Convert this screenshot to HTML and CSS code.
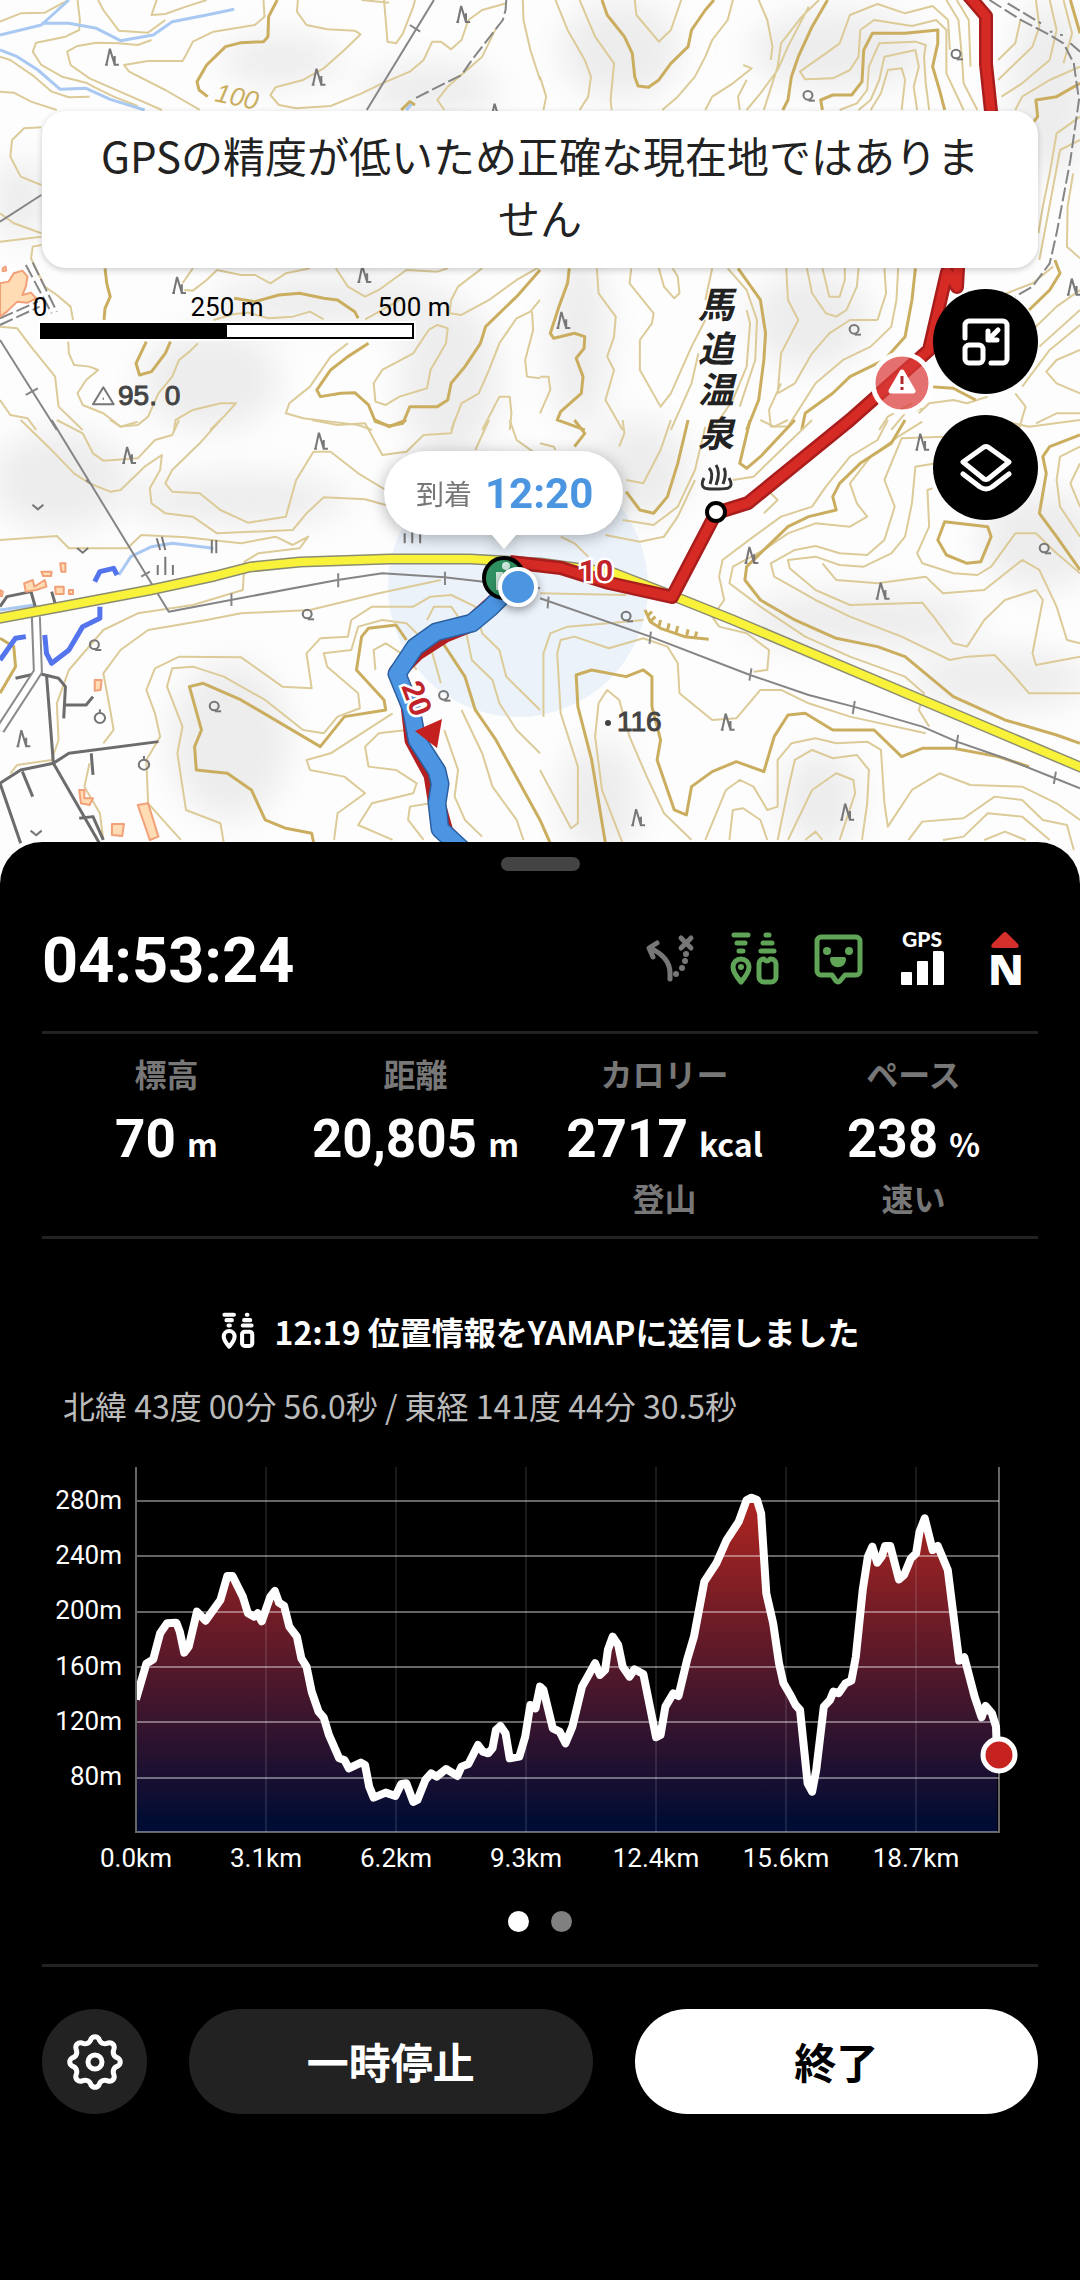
FILE: index.html
```html
<!DOCTYPE html>
<html lang="ja">
<head>
	<meta charset="utf-8">
	<meta name="viewport" content="width=device-width, initial-scale=1">
	<title>活動中</title>
	<link rel="stylesheet" href="styles.css">
</head>
<body>
	<main class="app">
		<section class="mapArea">
			<svg class="map" viewBox="0 0 1080 884" role="img" aria-label="地図">
				<defs>
					<filter id="soft" x="-50%" y="-50%" width="200%" height="200%">
						<feGaussianBlur stdDeviation="16"/>
					</filter>
					<symbol id="conifer" viewBox="-20 -30 40 60" overflow="visible">
						<path d="M-16 24L-6 -24L8 24M8 -2V24H20M-12 24H-20"/>
					</symbol>
					<symbol id="broad" viewBox="-20 -20 40 40" overflow="visible">
						<circle r="13"/>
						<path d="M2 16H20"/>
					</symbol>
					<symbol id="orchard" viewBox="-20 -20 40 40" overflow="visible">
						<circle r="15" cy="4"/>
						<path d="M0 -22V-8"/>
					</symbol>
					<symbol id="field" viewBox="-20 -20 40 40" overflow="visible">
						<path d="M-16 -6L0 8L16 -6"/>
					</symbol>
				</defs>
				<rect width="1080" height="884" fill="#fdfdfd"/>
				<!-- hill shading -->
				<g class="shade" filter="url(#soft)">
					<ellipse cx="280" cy="60" rx="60" ry="26"/>
					<ellipse cx="430" cy="90" rx="70" ry="28"/>
					<ellipse cx="620" cy="50" rx="60" ry="50"/>
					<ellipse cx="840" cy="50" rx="90" ry="40"/>
					<ellipse cx="1050" cy="90" rx="40" ry="90"/>
					<ellipse cx="20" cy="200" rx="30" ry="40"/>
					<ellipse cx="330" cy="300" rx="120" ry="26"/>
					<ellipse cx="210" cy="380" rx="70" ry="50"/>
					<ellipse cx="450" cy="380" rx="50" ry="80"/>
					<ellipse cx="580" cy="340" rx="30" ry="90"/>
					<ellipse cx="810" cy="320" rx="60" ry="50"/>
					<ellipse cx="60" cy="480" rx="70" ry="50"/>
					<ellipse cx="240" cy="500" rx="110" ry="26"/>
					<ellipse cx="640" cy="470" rx="50" ry="50"/>
					<ellipse cx="1040" cy="540" rx="60" ry="50"/>
					<ellipse cx="860" cy="620" rx="120" ry="30"/>
					<ellipse cx="1000" cy="680" rx="90" ry="30"/>
					<ellipse cx="230" cy="740" rx="60" ry="80"/>
					<ellipse cx="600" cy="800" rx="40" ry="60"/>
					<ellipse cx="820" cy="800" rx="40" ry="50"/>
				</g>
				<circle cx="518" cy="587" r="130" fill="#4c95e0" opacity=".1"/>

				<!-- contour lines, north west -->
				<g class="tile" transform="scale(.3444 .3333)">
					<path class="contour" d="M0 65L60 40L130 38L180 10L200 0M225 0L232 60L230 90L190 110L105 128L95 155L120 195L180 230L250 248L275 262L330 290L400 318M285 0L300 30L345 92L430 98L480 60M455 0L440 45L480 42L540 20L600 0M765 0L768 50L740 75L620 95L560 125L540 165L530 183L430 183L360 195L375 215L480 270L580 330M440 120L400 135L345 130L280 128L225 138L195 155L205 195L260 235L360 280L470 330M0 170L30 180L100 230L150 275L200 292L260 290M0 275L40 278L90 305L165 330"/>
					<path class="contour" d="M865 0L862 35L890 75L950 88L1030 92L1047 103L1000 150L940 205L880 240L800 262L785 285L810 315L860 325L960 318L1050 280L1110 250L1190 215L1230 180L1255 125L1280 125L1310 148L1340 120L1360 60L1400 30L1470 10M1115 0L1120 60L1125 125L1150 130L1170 100L1200 20L1205 0M1050 0L1130 8M1568 240L1540 150L1520 60L1518 0M1440 85L1400 170L1300 260L1270 300L1290 330M120 382L70 385L35 420L30 470L60 530L120 555M120 700L40 670L0 640M0 725L120 710M120 735L95 740L90 775L130 860L165 885L205 920L212 960"/>
					<path class="contour" d="M560 805L530 850M535 870L560 872L600 840L630 810L700 825L740 825L785 850L830 820L900 805M620 960L680 942L720 938L780 955L850 950L900 935L940 958M975 805L1010 860L1060 890L1100 870L1180 810L1270 815L1300 805M1060 958L1110 930L1160 900M1400 805L1330 860L1310 900L1305 940L1340 945L1420 900L1500 840L1568 800M1270 975L1300 985L1295 1030L1250 1110L1240 1165L1160 1190L1120 1215L1090 1205L1085 1150L1110 1110L1200 1060L1245 990ZM1010 1030L960 1070L900 1160L840 1210L830 1240L880 1255L960 1265L1040 1275L1080 1290"/>
					<path class="contour" d="M575 1030L550 1055L520 1080L500 1130L460 1180L430 1250L400 1275L350 1280L300 1240L240 1215L225 1180L250 1140L285 1110L260 1100L215 1095L200 1060L198 1025M0 980L50 985L90 1040L160 1130L170 1220L240 1290M0 1200L30 1245L80 1255L105 1290M610 1290L650 1250L685 1210L640 1210L560 1230L510 1260L505 1290M1568 900L1540 935L1500 955L1450 1030L1420 1110L1390 1180L1340 1210L1310 1290M1568 1135L1530 1130L1525 1080L1548 990L1545 935M1400 1290L1450 1190L1480 1190L1485 1240L1480 1290"/>
					<path class="contour main" d="M805 0L780 50L778 110L765 125L700 128L655 140L600 195L572 245L578 270L603 290M305 805L310 850L320 890L305 925L302 960M680 895L740 905L810 885L870 880L940 895L980 900L1030 935L1040 955M1568 810L1500 890L1410 980L1395 1030L1350 1100L1310 1150L1300 1200L1270 1220L1190 1220L1170 1270L1130 1278L1090 1265L1070 1215L1030 1178L990 1180L930 1190L920 1170L960 1110L1010 1070L1070 1030M425 1025L395 1090L405 1125L440 1115L480 1060L495 1025M1165 330L1190 305L1205 315"/>
					<path class="stream" d="M0 105L120 75L200 0M120 70L200 70L280 85L350 122L445 105L500 65L600 45L680 28M0 150L50 170L110 210L175 268L250 265L320 298L420 330M1180 330L1195 312"/>
					<path class="line" d="M1260 0L1065 330M1190 75L1220 95M0 665L120 585M0 1020L165 1290M75 1185L110 1165"/>
					<path class="line dash" d="M1470 0L1468 30L1460 60L1370 180L1340 225L1205 295M75 795L150 940M95 788L165 935M0 955L110 905M0 975L115 920"/>
					<path class="house" d="M0 850L25 845L40 820L65 812L80 830L75 860L65 885L90 878L105 895L80 908L50 905L20 935L0 950ZM8 805L16 800L18 812L8 814Z"/>
					<g class="sign">
						<use href="#conifer" x="305" y="140" width="40" height="60"/>
						<use href="#conifer" x="905" y="200" width="40" height="60"/>
						<use href="#conifer" x="1325" y="12" width="40" height="60"/>
						<use href="#conifer" x="1422" y="305" width="40" height="60"/>
						<use href="#conifer" x="500" y="825" width="40" height="60"/>
						<use href="#conifer" x="1038" y="792" width="40" height="60"/>
						<path d="M270 1213L300 1162L330 1213ZM298 1196H302"/>
					</g>
				</g>

				<!-- north east -->
				<g class="tile" transform="translate(540 0) scale(.3444 .3333)">
					<path class="contour" d="M0 230L18 290L10 330M45 0L80 90L130 180L148 230L140 290L115 330M115 0L160 110L215 190L205 300L208 330M275 0L280 45L345 125L380 90L400 30L410 0M560 0L545 60L500 120L480 170L450 230L400 290L355 330M635 0L660 60L675 140L670 180M590 195L615 205L560 250L500 290L480 330M600 240L575 290L580 330M780 20L720 140L690 210L640 280L600 330M810 0L760 50L700 130L690 200L650 330M1190 150L1185 60L1140 18L1060 40L980 12L900 45L870 130L830 160L775 200L755 215L770 238L850 235L900 210L925 170L930 90L970 60L1080 78L1150 60L1180 90L1180 220L1230 330"/>
					<path class="contour" d="M870 330L920 310L950 270L955 200L985 130L1090 125L1120 135L1115 170L1120 250L1130 330M925 330L960 300L985 240L1000 170L1090 150L1100 200L1085 260L1095 330M960 330L990 280L1010 210L1050 205L1060 240L1050 330M1180 0L1215 60L1225 170L1230 250L1270 330M1210 0L1245 60L1250 200M1395 60L1380 130L1330 180M1440 0L1450 80L1430 140L1330 240M1480 0L1500 90L1480 180L1400 250L1340 290M1568 200L1480 240L1400 290L1380 330M1520 0L1545 100L1520 190M1568 350L1500 400L1480 520L1460 620L1447 700M1568 420L1510 450L1490 560L1450 780M1548 520L1532 620L1530 740L1568 775"/>
					<path class="contour" d="M165 805L170 880L220 950L215 1010L195 1070L215 1110L190 1200L240 1290M265 805L260 850L330 940L325 970L290 1020L290 1110L350 1220L380 1180L440 1040L480 960M345 805L360 860L390 895L405 880L400 830L385 805M500 805L480 900M600 930L610 970L600 1100L560 1200L500 1290M545 805L600 870L630 960L625 1080L580 1220M460 1060L440 1150L380 1290M715 805L720 900L750 960L700 1060L690 1180L740 1150L790 1060L840 1000L900 960L980 960M775 805L790 880L830 940L860 950L890 930L920 860L925 805M820 805L840 890L870 890L885 840L885 805M1000 805L1005 880L980 960M1040 805L1035 900L1020 980L960 1040L880 1080L800 1150L720 1280L670 1280L665 1230L700 1150M0 1130L25 1130L30 1170L0 1240"/>
					<path class="contour" d="M1568 870L1500 920L1430 990M1568 930L1450 1040M1568 975L1480 1050L1400 1160M1568 1050L1500 1080L1470 1115L1500 1150L1568 1180M1100 1240L1130 1210L1200 1200L1240 1210L1300 1190M985 1290L1010 1250L1080 1210M1020 1290L1060 1240L1110 1225M1380 1180L1410 1220L1390 1290M1568 1240L1500 1240L1440 1270M1330 890L1430 850L1490 800"/>
					<path class="contour main" d="M180 0L195 45L245 110L268 160L275 230L285 258L315 262L345 240L380 190L430 140L440 90L480 30L505 0M835 0L790 80L750 170L730 230L720 300L705 330M820 330L815 300L850 285L905 285L935 245L940 150L965 100L1060 100L1155 90L1155 130L1140 200L1160 270L1175 330M1540 0L1568 100M1568 250L1500 290L1440 300L1445 350L1430 370M85 805L80 850L55 920L30 1000L40 1015L100 1000L130 1010L128 1045L105 1075L125 1130L120 1180L60 1235L50 1260L130 1290M575 805L640 900L655 1000L650 1080L635 1200L600 1290M1090 805L1080 900L1060 1010L1000 1080L900 1130L850 1180L770 1240L760 1290M1495 780L1510 820L1480 870L1420 930M1130 1160L1200 1165L1265 1200"/>
					<path class="line dash" d="M1305 0L1400 62L1480 105L1520 130L1550 190L1565 300L1540 480L1500 700L1480 790L1430 860L1380 890M1358 10L1455 70M1480 95H1488M1510 105H1518M1540 130L1568 155"/>
					<g class="sign">
						<use href="#broad" x="1188" y="142" width="40" height="40"/>
						<use href="#broad" x="758" y="266" width="40" height="40"/>
						<use href="#broad" x="892" y="968" width="40" height="40"/>
						<use href="#conifer" x="48" y="930" width="40" height="60"/>
						<use href="#conifer" x="1530" y="830" width="40" height="60"/>
					</g>
				</g>

				<!-- south west -->
				<g class="tile" transform="translate(0 420) scale(.3444 .3333)">
					<path class="contour" d="M60 0L140 80L215 160L260 190L320 215L350 210L420 140L470 105L465 150L435 205L440 250L480 280L560 290L630 340L850 330L890 280L940 232L1060 238L1120 255M165 0L240 40L270 100L300 122L400 115L450 60L500 45L520 0M320 0L350 20L400 5M640 0L580 70L500 150L480 190L500 215L580 220L640 270L720 308L830 290L860 180L910 95L960 95L1040 160L1120 210M905 0L980 15L1060 10L1110 105L1180 95L1230 45L1310 40L1320 0M1380 90L1420 0M1480 0L1500 60L1568 110"/>
					<path class="contour" d="M0 360L165 348L200 385L370 385L410 345L540 352L700 370L800 350L850 375L895 350L870 385L750 400L710 425L705 510L560 555L400 580L300 630L200 750L165 850L170 960L150 1020L50 1035L30 1060M1280 480L1100 520L900 570L700 580L600 600L430 630L350 690L300 760L320 870L330 930L300 970M1568 870L1470 770L1450 690L1400 640L1380 560L1310 525L1250 530L1200 560L1080 560L1020 600L1010 650L930 655L890 700L905 805L820 800L700 712L520 710L450 745L425 810L450 880L465 950L425 1020L430 1150L525 1260"/>
					<path class="contour" d="M650 1270L640 1210L540 1170L515 1000L530 920L485 800L500 745L560 740L650 770L770 840L880 930L940 940L980 890L1045 865L1040 820L950 740L940 700L1020 690L1040 620L1110 600L1180 610L1250 680L1280 790M1240 600L1260 560L1310 560L1350 620L1370 720L1430 780L1450 850L1500 930L1568 1000M1090 750L1085 690L1120 670L1180 710L1210 750M1140 880L1050 940L960 1000L890 1020L900 1050L1000 1070L1060 1120L980 1180L970 1260M1180 930L1100 940L1060 980L1070 1040L1150 1050L1210 1090L1200 1120L1080 1150L1040 1215L1140 1260M1250 1150L1190 1160L1185 1200L1230 1260M1290 930L1330 1050L1320 1130L1350 1200L1400 1250M1340 870L1400 1000L1430 1100L1500 1200L1520 1260M260 1030L245 1100L290 1180L300 1260"/>
					<path class="contour main" d="M1090 0L1130 20L1180 0M915 1290L905 1240L830 1225L770 1200L730 1110L660 1060L570 1050L565 980L585 930L550 800L590 790L700 840L930 980L1000 890L1120 870L1115 840L1035 750L1050 650L1070 625L1150 615L1180 660M1280 660L1350 770L1380 870L1440 960L1568 1200M0 655L40 680L45 740L0 820"/>
					<path class="stream" d="M345 465L380 410L440 380L500 370L620 385M0 570L100 555"/>
					<path class="river" d="M75 650L45 655L0 720M130 645L135 700L150 730L200 690L240 620L290 595L290 560M275 485L290 455L330 445L340 465"/>
					<path class="line" d="M150 0L490 575L670 540L980 480L1110 460L1290 472L1568 505M250 180L268 195M672 520V558M982 460V502M1292 455V495M410 470L435 455"/>
					<path class="road" d="M45 775L110 760L170 775L190 800L185 895M190 855L250 855L270 830M135 765L155 1030L300 1290M155 1030L60 1050L0 1090L60 1270M155 1030L200 1000L460 965M265 1000L270 1065M65 1055L95 1130M230 1195L270 1190L300 1260M0 560L20 530L90 515L105 570M150 515L160 550"/>
					<path class="laneEdge" d="M104 590L110 755L0 930"/>
					<path class="lane" d="M104 580L110 755L0 930"/>
					<path class="house" d="M400 1155L430 1150L460 1250L435 1260ZM325 1212L360 1212L355 1248L325 1245ZM275 780L295 780L292 810L275 812ZM230 1110L245 1110L245 1135L270 1135L260 1155L235 1150ZM70 490L95 480L100 500L130 480L135 500L105 510L75 515ZM120 455L150 455L148 468L125 468ZM175 430L190 430L190 455L178 455ZM160 500L185 500L185 522L162 522ZM200 510L212 510L212 522L200 522ZM0 510L8 515L6 528L0 528Z"/>
					<g class="sign">
						<use href="#conifer" x="355" y="75" width="40" height="60"/>
						<use href="#conifer" x="912" y="32" width="40" height="60"/>
						<use href="#conifer" x="48" y="925" width="40" height="60"/>
						<use href="#broad" x="872" y="562" width="40" height="40"/>
						<use href="#broad" x="254" y="654" width="40" height="40"/>
						<use href="#broad" x="602" y="838" width="40" height="40"/>
						<use href="#broad" x="1268" y="806" width="40" height="40"/>
						<use href="#orchard" x="270" y="870" width="40" height="40"/>
						<use href="#orchard" x="398" y="1010" width="40" height="40"/>
						<use href="#field" x="90" y="240" width="40" height="40"/>
						<use href="#field" x="220" y="370" width="40" height="40"/>
						<use href="#field" x="85" y="1218" width="40" height="40"/>
						<path d="M480 410V465M458 435V465M502 435V465M455 355L465 390M470 350L480 390M615 360V400M628 360V400M1175 340V370M1197 335V370M1220 340V370"/>
					</g>
				</g>

				<!-- south east -->
				<g class="tile" transform="translate(540 420) scale(.3444 .3333)">
					<path class="contour" d="M0 70L40 80L45 90M240 0L245 40L230 80M380 0L350 90L300 190L250 180M480 20L450 150L400 260L330 315L240 300M60 350L100 370L140 410M190 345L290 365L360 350L400 290L450 180M560 180L620 170L700 90L790 0M640 0L680 20L720 0M670 220L690 240L650 280M1010 0L980 60L900 110L830 200L790 260L700 290L620 350L530 420L520 470L535 540L500 590L520 620L600 640L665 690L660 750L620 755M1110 5L1040 50L960 110L900 190L920 250L950 290L900 320L800 310L720 340L650 390L560 440L550 490L640 560L770 650L900 710L1060 770L1115 820L1100 870L1130 920"/>
					<path class="contour" d="M1170 50L1050 55L1000 180L1030 260L1000 360L950 405L870 400L800 378L740 390L670 430L680 470L800 540L900 590L1050 650L1190 720L1240 710L1320 705L1370 760L1420 820L1568 820M1150 130L1090 140L1080 250L1060 350L1020 400L940 440L870 435L800 410L720 420L725 445L800 510L900 555L1110 548L1150 600L1200 670L1240 680L1290 600L1350 540L1440 510L1460 540L1430 700L1440 735L1568 710M1140 205L1125 210L1130 320L1095 400L1110 430L1200 460L1270 465L1310 440L1380 340L1440 340L1500 400L1568 460M820 430L860 480L980 490L1120 470L1170 520L1290 510L1400 420L1450 450L1500 560L1530 660L1568 670M1568 80L1510 110L1500 180L1510 260L1568 350M1568 130L1540 190L1568 260M1330 0L1420 20L1568 0"/>
					<path class="contour" d="M0 520L250 525M10 890L10 700L30 640L80 620L200 610L300 600M0 1050L90 1225L110 1210L110 1040L60 880L50 700L60 660L100 650L200 685L300 655L370 680L400 730L405 820L500 900L570 895L640 810L700 810L780 850L900 890L1120 940M240 1270L180 1110L160 950L170 850L195 810L230 840L260 950L310 1070L360 1180L440 1260M480 1260L540 1110L580 1080L620 1100L660 1170L690 1160L690 1020L730 970L800 955L860 970L950 965L990 990L1000 1150L1010 1220L1080 1110L1160 1060L1250 1095L1400 1100L1500 1150L1568 1200M690 1260L720 1110L740 1020L790 990L850 1015L920 1005L955 1050L950 1150L935 1260M550 1260L560 1170L590 1165L640 1200L660 1260M720 1260L790 1110L860 1060L910 1080L915 1120L870 1260M1070 1260L1110 1205L1230 1195L1320 1130L1400 1140L1460 1200L1530 1215L1550 1290M1170 1260L1230 1250L1300 1180L1400 1190L1480 1260M1290 1260L1350 1235L1410 1260M770 1260L800 1235L820 1260"/>
					<path class="contour main" d="M430 0L400 130L370 230L330 280L290 270L250 215M100 80L130 40L100 0M610 0L580 130L600 145L640 110L740 0M1060 0L1020 70L930 130L870 190L850 230L860 270L780 290L720 320L660 380L600 440L595 480L640 540L740 600L860 655L980 680L1060 710L1200 830L1350 900L1500 945L1568 970M1175 305L1300 320L1310 350L1280 425L1240 430L1180 405L1155 360ZM1568 45L1480 80L1460 110L1470 160L1450 280L1500 350L1568 450M190 1270L150 1020L110 860L105 765L150 750L250 770L300 750L325 770L325 860L350 960L340 1020L390 1170L425 1185L440 1100L500 1055L570 1025L650 1055L680 950L720 885L770 880L850 930L970 930L1050 1010L1110 985L1200 985L1330 1010L1420 1040M0 1200L30 1270"/>
					<path class="contour main" d="M305 570L320 605L350 625L420 650L490 658M310 590L325 575M320 605L335 590M345 622L350 600M370 632L375 610M395 640L400 618M425 652L430 628M450 655L455 635"/>
					<path class="line" d="M0 535L320 650L610 765L780 825L910 860L1110 920L1210 965L1350 1015L1495 1075L1568 1105M25 530L22 565M322 635L318 672M614 745L608 782M914 843L908 882M1214 945L1208 985M1498 1055L1492 1092"/>
					<g class="sign">
						<use href="#conifer" x="1090" y="35" width="40" height="60"/>
						<use href="#conifer" x="594" y="375" width="40" height="60"/>
						<use href="#conifer" x="975" y="482" width="40" height="60"/>
						<use href="#conifer" x="525" y="875" width="40" height="60"/>
						<use href="#conifer" x="265" y="1162" width="40" height="60"/>
						<use href="#conifer" x="872" y="1145" width="40" height="60"/>
						<use href="#broad" x="1444" y="364" width="40" height="40"/>
						<use href="#broad" x="230" y="568" width="40" height="40"/>
					</g>
				</g>

				<!-- highway -->
				<path class="highwayEdge" d="M-5 619L60 607L150 590L215 576L250 567L300 562L390 559L470 559L540 563L614 573L678 598L733 620L922 700L1085 769"/>
				<path class="highway" d="M-5 619L60 607L150 590L215 576L250 567L300 562L390 559L470 559L540 563L614 573L678 598L733 620L922 700L1085 769"/>

				<text class="heightText" x="118" y="405">95. 0</text>
				<circle cx="608" cy="723" r="3" fill="#444"/>
				<text class="heightText" x="617" y="731">116</text>
				<text class="contourText" transform="translate(214 101) rotate(12)">100</text>
				<text class="placeText"><tspan x="698" y="318">馬</tspan><tspan x="698" y="362">追</tspan><tspan x="698" y="403">温</tspan><tspan x="698" y="447">泉</tspan></text>
				<path d="M704 478C698 490 708 489 716 489C724 489 736 490 729 478M709 468Q714 473 710 484M716 465Q721 472 716 485M724 468Q727 474 723 484" fill="none" stroke="#333" stroke-width="3"/>

				<!-- planned route -->
				<g class="route">
					<path class="routeEdge" d="M968 -5L986 16L986 64L993 130M959 250L957 287L947 272L929 350L850 420L748 503L716 513L672 597L609 583L561 568L510 562"/>
					<path class="routeLine" d="M968 -5L986 16L986 64L993 130M959 250L957 287L947 272L929 350L850 420L748 503L716 513L672 597L609 583L561 568L510 562"/>
					<path class="under" d="M500 597L470 624L445 634L417 652L397 672L409 705L413 740L432 775L436 800L445 832L461 850"/>
				</g>
				<path class="trackEdge" d="M503 595L490 608L472 623L436 632L415 647L397 674L411 708L417 740L437 771L440 784L437 803L440 829L466 853"/>
				<path class="track" d="M503 595L490 608L472 623L436 632L415 647L397 674L411 708L417 740L437 771L440 784L437 803L440 829L466 853"/>
				<path d="M415 731L442 719L437 748Z" fill="#c4201f"/>
				<text class="routeText" x="596" y="581">10</text>
				<text class="routeText" transform="translate(407 702) rotate(70)">20</text>
				<circle cx="716" cy="512" r="9" fill="#fff" stroke="#000" stroke-width="4"/>

				<g class="warnPin">
					<circle cx="902" cy="383" r="29" fill="#d93a38" fill-opacity=".72" stroke="#fff" stroke-width="5"/>
					<path d="M902 372L913 391H891Z" fill="#fff" stroke="#fff" stroke-width="5" stroke-linejoin="round"/>
					<path d="M902 376V384M902 387V390" stroke="#b02a2c" stroke-width="3"/>
				</g>

				<circle cx="504" cy="578" r="20" fill="#2f9160" stroke="#000" stroke-width="4"/>
				<path d="M496 572h7v18h-7zM506 570h6v6h-6z" fill="#cfe8dc"/>
				<circle cx="506" cy="566" r="4" fill="#cfe8dc"/>
				<circle class="here" cx="518" cy="587" r="18" fill="#4c95e0" stroke="#fff" stroke-width="4"/>
			</svg>

			<div class="mapOverlay">
				<p class="toast" role="status">GPSの精度が低いため正確な現在地ではありません</p>
				<div class="mapRow">
					<div class="scale">
						<div class="scaleText"><span>0</span><span>250 m</span><span>500 m</span></div>
						<div class="scaleBar"></div>
					</div>
					<div class="mapButtons">
						<button class="roundBtn" type="button" aria-label="縮小表示">
							<svg width="48" height="48" viewBox="0 0 48 48" class="stroke">
								<path d="M3 20V7a4 4 0 0 1 4-4h34a4 4 0 0 1 4 4v34a4 4 0 0 1-4 4H29"/>
								<rect x="3" y="27" width="18" height="18" rx="4"/>
								<path d="M26 13v9h9M27 21l9-9"/>
							</svg>
						</button>
						<button class="roundBtn" type="button" aria-label="レイヤー">
							<svg width="52" height="50" viewBox="0 0 52 50" class="stroke">
								<path d="M3 19L24 4q2-1 4 0L49 19 28 36q-2 1-4 0Z"/>
								<path d="M3 31L20 44q6 4 12 0L49 31"/>
							</svg>
						</button>
					</div>
				</div>
			</div>
			<div class="arrive"><span>到着</span><strong>12:20</strong></div>
		</section>

		<section class="sheet">
			<div class="handle"></div>
			<header class="status">
				<h1 class="timer">04:53:24</h1>
				<div class="icons">
					<svg viewBox="0 0 63 63" class="icon off">
						<path d="M31 52V46C31 34 22 26 11 21M18 16L10 21L14 30M42 11L52 21M52 11L42 21"/>
						<g class="dots"><circle cx="37" cy="47" r="3"/><circle cx="43" cy="41" r="3"/><circle cx="46" cy="34" r="3"/><circle cx="47" cy="27" r="3"/></g>
					</svg>
					<svg viewBox="0 0 63 63" class="icon on">
						<path d="M11 8H25M14 16H22M16 24H20M43 8H46M40 16H49M38 24H51"/>
						<path d="M18 55C12 48 10 44 10 40a8 8 0 0 1 16 0C26 44 24 48 18 55ZM40 32h1q3 4 6 0h1a5 5 0 0 1 5 5v13a5 5 0 0 1-5 5h-7a5 5 0 0 1-5-5V37a5 5 0 0 1 4-5Z"/>
						<circle class="dots" cx="18" cy="40" r="3"/>
					</svg>
					<svg viewBox="0 0 63 63" class="icon on">
						<path d="M14 10H49a4 4 0 0 1 4 4V44a4 4 0 0 1-4 4H38L33 54q-2 2-4 0L25 48H14a4 4 0 0 1-4-4V14a4 4 0 0 1 4-4Z"/>
						<g class="dots"><circle cx="20" cy="24" r="4"/><circle cx="42" cy="24" r="4"/><path d="M25 30H37Q39 30 39 32C39 43 23 43 23 32Q23 30 25 30Z"/></g>
					</svg>
					<svg viewBox="0 0 63 63" class="icon solid">
						<text class="gpsText" x="31" y="20">GPS</text>
						<path d="M10 46q0-1 1-1h9q1 0 1 1v12H11q-1 0-1-1ZM26 35q0-1 1-1h9q1 0 1 1v23H26ZM42 25q0-1 1-1h8q2 0 2 2v31q0 1-1 1H42Z"/>
					</svg>
					<svg viewBox="0 0 63 63" class="icon solid">
						<path class="north" d="M28 6q2-2 4 0L43 17q2 4-2 4H19q-4 0-2-4Z"/>
						<text class="northText" x="31" y="58">N</text>
					</svg>
				</div>
			</header>

			<dl class="stats">
				<div>
					<dt>標高</dt>
					<dd class="value">70 <small>m</small></dd>
				</div>
				<div>
					<dt>距離</dt>
					<dd class="value">20,805 <small>m</small></dd>
				</div>
				<div>
					<dt>カロリー</dt>
					<dd class="value">2717 <small>kcal</small></dd>
					<dd class="sub">登山</dd>
				</div>
				<div>
					<dt>ペース</dt>
					<dd class="value">238 <small>%</small></dd>
					<dd class="sub">速い</dd>
				</div>
			</dl>

			<p class="sent">
				<svg width="34" height="38" viewBox="6 4 50 56" class="icon sentIcon">
					<path d="M11 8H25M14 16H22M17 24H19M44 8H45M40 16H49M38 24H51"/>
					<path d="M18 55C12 48 10 44 10 40a8 8 0 0 1 16 0C26 44 24 48 18 55ZM41 33h7a4 4 0 0 1 4 4v13a4 4 0 0 1-4 4h-7a4 4 0 0 1-4-4V37a4 4 0 0 1 4-4Z"/>
				</svg>
				12:19 位置情報をYAMAPに送信しました
			</p>
			<p class="position">北緯 43度 00分 56.0秒 / 東経 141度 44分 30.5秒</p>

			<svg class="chart" viewBox="0 0 1080 440" role="img" aria-label="標高グラフ">
				<defs>
					<linearGradient id="fill" gradientUnits="userSpaceOnUse" x1="0" y1="120" x2="0" y2="1120">
						<stop offset="0" stop-color="#b5261f"/>
						<stop offset="1" stop-color="#000c34"/>
					</linearGradient>
					<clipPath id="plot"><rect x="137" y="0" width="880" height="400"/></clipPath>
				</defs>
				<g clip-path="url(#plot)">
					<g transform="scale(.3444 .3333)">
						<path fill="url(#fill)" d="M398 1147V737L425 641L445 628L465 550L485 520L512 518L522 545L535 608L548 590L572 485L597 512L640 450L660 378L675 378L705 440L720 490L738 500L748 490L760 514L785 440L798 423L810 458L825 468L840 530L862 560L875 625L890 650L905 725L925 785L940 803L955 855L985 925L1000 930L1013 955L1048 938L1060 945L1072 1010L1085 1043L1120 1028L1148 1038L1165 1002L1180 1000L1200 1056L1212 1050L1235 990L1252 970L1268 980L1295 957L1328 978L1340 950L1360 942L1388 885L1402 905L1418 910L1430 895L1440 840L1453 828L1468 850L1480 925L1508 920L1525 860L1540 765L1555 775L1568 710L1578 720L1605 835L1625 845L1642 880L1662 830L1690 710L1728 640L1742 675L1757 660L1765 600L1779 560L1795 585L1808 650L1828 680L1842 658L1868 672L1905 862L1918 855L1932 770L1955 730L1970 738L1995 630L2015 560L2045 395L2080 340L2110 270L2145 215L2168 150L2182 143L2198 150L2210 190L2225 430L2245 520L2262 640L2275 700L2295 735L2310 765L2323 780L2335 900L2345 1000L2358 1025L2370 960L2392 770L2410 750L2420 725L2435 730L2455 700L2472 692L2485 620L2505 420L2520 320L2533 290L2547 338L2560 320L2570 288L2585 288L2610 388L2625 375L2645 325L2660 310L2670 245L2685 205L2708 300L2723 288L2752 360L2785 632L2800 622L2830 740L2850 802L2862 768L2880 790L2895 830V917V1147Z"/>
					</g>
				</g>
				<g class="vgrid">
					<path d="M266 17V382M396 17V382M526 17V382M656 17V382M786 17V382M916 17V382"/>
				</g>
				<g class="hgrid">
					<path d="M137 51H999M137 106H999M137 162H999M137 217H999M137 272H999M137 328H999"/>
				</g>
				<path class="frame" d="M136 17V382H999V17"/>
				<g clip-path="url(#plot)">
					<g transform="scale(.3444 .3333)">
						<path class="profile" d="M398 737L425 641L445 628L465 550L485 520L512 518L522 545L535 608L548 590L572 485L597 512L640 450L660 378L675 378L705 440L720 490L738 500L748 490L760 514L785 440L798 423L810 458L825 468L840 530L862 560L875 625L890 650L905 725L925 785L940 803L955 855L985 925L1000 930L1013 955L1048 938L1060 945L1072 1010L1085 1043L1120 1028L1148 1038L1165 1002L1180 1000L1200 1056L1212 1050L1235 990L1252 970L1268 980L1295 957L1328 978L1340 950L1360 942L1388 885L1402 905L1418 910L1430 895L1440 840L1453 828L1468 850L1480 925L1508 920L1525 860L1540 765L1555 775L1568 710L1578 720L1605 835L1625 845L1642 880L1662 830L1690 710L1728 640L1742 675L1757 660L1765 600L1779 560L1795 585L1808 650L1828 680L1842 658L1868 672L1905 862L1918 855L1932 770L1955 730L1970 738L1995 630L2015 560L2045 395L2080 340L2110 270L2145 215L2168 150L2182 143L2198 150L2210 190L2225 430L2245 520L2262 640L2275 700L2295 735L2310 765L2323 780L2335 900L2345 1000L2358 1025L2370 960L2392 770L2410 750L2420 725L2435 730L2455 700L2472 692L2485 620L2505 420L2520 320L2533 290L2547 338L2560 320L2570 288L2585 288L2610 388L2625 375L2645 325L2660 310L2670 245L2685 205L2708 300L2723 288L2752 360L2785 632L2800 622L2830 740L2850 802L2862 768L2880 790L2892 830L2895 917"/>
					</g>
				</g>
				<circle cx="999" cy="305" r="16" fill="#c62320" stroke="#fff" stroke-width="5"/>
				<g class="yText">
					<text x="122" y="59">280m</text>
					<text x="122" y="114">240m</text>
					<text x="122" y="169">200m</text>
					<text x="122" y="225">160m</text>
					<text x="122" y="280">120m</text>
					<text x="122" y="335">80m</text>
				</g>
				<g class="xText">
					<text x="136" y="417">0.0km</text>
					<text x="266" y="417">3.1km</text>
					<text x="396" y="417">6.2km</text>
					<text x="526" y="417">9.3km</text>
					<text x="656" y="417">12.4km</text>
					<text x="786" y="417">15.6km</text>
					<text x="916" y="417">18.7km</text>
				</g>
			</svg>

			<div class="pager">
				<button type="button" class="dot active" aria-label="1ページ目"></button>
				<button type="button" class="dot" aria-label="2ページ目"></button>
			</div>

			<footer class="actions">
				<button type="button" class="gear" aria-label="設定">
					<svg width="56" height="56" viewBox="0 0 56 56" class="stroke">
						<path d="M24 5C26 2 30 2 32 5C33 9 37 11 41 9C45 8 48 11 47 15C45 19 47 23 51 24C54 26 54 30 51 32C47 33 45 37 47 41C48 45 45 48 41 47C37 45 33 47 32 51C30 54 26 54 24 51C23 47 19 45 15 47C11 48 8 45 9 41C11 37 9 33 5 32C2 30 2 26 5 24C9 23 11 19 9 15C8 11 11 8 15 9C19 11 23 9 24 5Z"/>
						<circle cx="28" cy="28" r="7"/>
					</svg>
				</button>
				<button type="button" class="bigBtn pause">一時停止</button>
				<button type="button" class="bigBtn finish">終了</button>
			</footer>
		</section>
	</main>
</body>
</html>
```
FILE: styles.css
```css
*, *:after, *:before {
	box-sizing: border-box;
}
html, body {
	margin: 0;
	background: #000;
	color: #fff;
	font-family: "Noto Sans CJK JP", sans-serif;
}
p, h1, dl, dd {
	margin: 0;
}
button {
	border: none;
	padding: 0;
	font-family: inherit;
	cursor: pointer;
}
svg {
	display: block;
}

/* map */
.mapArea {
	position: relative;
}
.map {
	width: 100%;
	height: auto;
}
.tile path, .tile circle {
	fill: none;
	vector-effect: non-scaling-stroke;
	stroke-linejoin: round;
}
.shade {
	fill: #ededee;
}
.tile .contour {
	stroke: #dccb98;
	stroke-width: 2;
}
.tile .main {
	stroke: #caad5e;
	stroke-width: 3;
}
.tile .stream {
	stroke: #a9c9f2;
	stroke-width: 3;
}
.tile .river {
	stroke: #5474ee;
	stroke-width: 5;
}
.tile .line {
	stroke: #858585;
	stroke-width: 2;
}
.tile .dash {
	stroke-dasharray: 14 4;
}
.tile .road {
	stroke: #6c6c6c;
	stroke-width: 3;
}
.tile .laneEdge {
	stroke: #8a8a8a;
	stroke-width: 10;
}
.tile .lane {
	stroke: #fff;
	stroke-width: 6;
}
.tile .house {
	fill: #ffdcb4;
	stroke: #f2a078;
	stroke-width: 2;
}
symbol {
	fill: none;
	stroke: #777;
	stroke-width: 6;
}
.sign path {
	stroke: #777;
	stroke-width: 2;
}
.highwayEdge, .highway, .routeEdge, .routeLine, .under, .trackEdge, .track {
	fill: none;
	stroke-linejoin: round;
}
.highwayEdge {
	stroke: #8c8c70;
	stroke-width: 11;
}
.highway {
	stroke: #f8f23a;
	stroke-width: 8;
}
.routeEdge {
	stroke: #a91d1c;
	stroke-width: 14;
}
.routeLine {
	stroke: #d62a25;
	stroke-width: 9;
}
.under {
	stroke: #b31f20;
	stroke-width: 17;
}
.trackEdge {
	stroke: #2b5f9f;
	stroke-width: 19;
}
.track {
	stroke: #4c95e3;
	stroke-width: 16;
}
.heightText {
	font: 28px "Liberation Sans", sans-serif;
	fill: #444;
	stroke: #444;
}
.contourText {
	font: italic 26px "Liberation Sans", sans-serif;
	fill: #caad5e;
}
.placeText {
	font: italic bold 36px "Noto Sans CJK JP", sans-serif;
	fill: #222;
}
.routeText {
	font: bold 30px Roboto, sans-serif;
	fill: #c0232a;
	stroke: #fff;
	stroke-width: 5;
	paint-order: stroke;
	text-anchor: middle;
}
.here {
	filter: drop-shadow(0 3px 5px rgba(0, 0, 0, .4));
}
.mapOverlay {
	position: absolute;
	top: 111px;
	left: 42px;
	right: 42px;
}
.toast {
	background: #fff;
	color: #222;
	font-size: 42px;
	line-height: 62px;
	padding: 13px 42px 20px;
	border-radius: 24px;
	text-align: center;
	box-shadow: 0 2px 6px rgba(0, 0, 0, .2);
}
.mapRow {
	display: flex;
	justify-content: space-between;
	margin-top: 21px;
}
.scale {
	width: 374px;
	margin: 2px 0 0 -2px;
	color: #000;
	font: 26px/32px Roboto, sans-serif;
}
.scaleText {
	display: grid;
	grid-template-columns: repeat(3, 1fr);
	margin: 0 -25%;
	text-align: center;
}
.scaleBar {
	height: 16px;
	border: 2px solid #000;
	background: linear-gradient(90deg, #000 50%, #fff 50%);
	box-shadow: 0 0 0 2px rgba(255, 255, 255, .8);
}
.mapButtons {
	display: flex;
	flex-direction: column;
	gap: 21px;
}
.roundBtn, .gear {
	width: 105px;
	height: 105px;
	border-radius: 50%;
	background: #000;
	color: #fff;
	display: flex;
	align-items: center;
	justify-content: center;
	flex: none;
}
.stroke {
	fill: none;
	stroke: currentColor;
	stroke-width: 5;
	stroke-linecap: round;
	stroke-linejoin: round;
}
.arrive {
	position: absolute;
	top: 451px;
	left: 384px;
	display: flex;
	align-items: center;
	gap: 13px;
	height: 84px;
	padding: 0 30px 0 32px;
	border-radius: 42px;
	background: #fff;
	color: #777;
	font-size: 28px;
	filter: drop-shadow(0 3px 8px rgba(0, 0, 0, .3));
}
.arrive:after {
	content: "";
	position: absolute;
	top: 83px;
	left: 50%;
	margin-left: -13px;
	border: 13px solid transparent;
	border-top: 15px solid #fff;
	border-bottom: 0;
}
.arrive strong {
	font: bold 42px Roboto, sans-serif;
	color: #4c95e0;
}

/* bottom sheet */
.sheet {
	position: relative;
	margin-top: -42px;
	padding: 15px 42px 166px;
	border-radius: 42px 42px 0 0;
	background: #000;
}
.handle {
	width: 79px;
	height: 14px;
	margin: 0 auto;
	border-radius: 7px;
	background: #444;
}
.status {
	display: flex;
	justify-content: space-between;
	align-items: center;
	padding: 56px 0 41px;
	border-bottom: 3px solid #222;
}
.timer {
	padding-top: 4px;
	font: bold 63px/59px Roboto, sans-serif;
}
.icons {
	display: flex;
	gap: 21px;
}
.icon {
	fill: none;
	stroke: currentColor;
	stroke-width: 5;
	stroke-linecap: round;
	stroke-linejoin: round;
	overflow: visible;
}
.icons .icon {
	width: 63px;
	height: 63px;
}
.off {
	color: #777;
}
.on {
	color: #5fa457;
}
.dots, .solid {
	fill: currentColor;
	stroke: none;
}
.gpsText {
	font: 900 21px Lato, sans-serif;
	text-anchor: middle;
}
.north {
	fill: #d42f2b;
}
.northText {
	font: 800 43px "Open Sans", sans-serif;
	text-anchor: middle;
}
.stats {
	display: grid;
	grid-template-columns: repeat(4, 1fr);
	padding: 18px 0;
	border-bottom: 3px solid #222;
	text-align: center;
	white-space: nowrap;
}
.stats dt, .sub {
	font-size: 32px;
	font-weight: bold;
	line-height: 42px;
	color: #777;
}
.value {
	padding-top: 8px;
	font: bold 53px/74px Roboto, sans-serif;
	word-spacing: 0;
}
.value small {
	margin-left: -2px;
	font: bold 32px/42px "Noto Sans CJK JP", sans-serif;
}
.sent {
	display: flex;
	align-items: center;
	justify-content: center;
	gap: 20px;
	margin-top: 71px;
	font-size: 32px;
	font-weight: bold;
	line-height: 42px;
}
.sentIcon {
	stroke-width: 6;
}
.position {
	margin: 32px 0 24px 21px;
	font-size: 32px;
	line-height: 42px;
	color: #bbb;
}
.chart {
	width: calc(100% + 84px);
	margin: 0 -42px;
	font: 26px Roboto, sans-serif;
	fill: #fff;
}
.profile {
	fill: none;
	stroke: #fff;
	stroke-width: 8;
	stroke-linejoin: round;
	stroke-linecap: square;
	vector-effect: non-scaling-stroke;
}
.hgrid, .vgrid, .frame {
	fill: none;
	stroke: rgba(255, 255, 255, .4);
	stroke-width: 2;
}
.vgrid {
	stroke: rgba(255, 255, 255, .1);
}
.yText {
	text-anchor: end;
}
.xText {
	text-anchor: middle;
}
.pager {
	display: flex;
	justify-content: center;
	gap: 22px;
	margin: 21px 0 32px;
}
.dot {
	width: 21px;
	height: 21px;
	border-radius: 50%;
	background: #808080;
}
.dot.active {
	background: #fff;
}
.actions {
	display: flex;
	gap: 42px;
	padding-top: 42px;
	border-top: 3px solid #222;
}
.bigBtn {
	flex: 1;
	height: 105px;
	padding-bottom: 3px;
	border-radius: 53px;
	font-size: 42px;
	font-weight: bold;
}
.gear, .pause {
	background: #222;
	color: #fff;
}
.finish {
	background: #fff;
	color: #000;
}
```
